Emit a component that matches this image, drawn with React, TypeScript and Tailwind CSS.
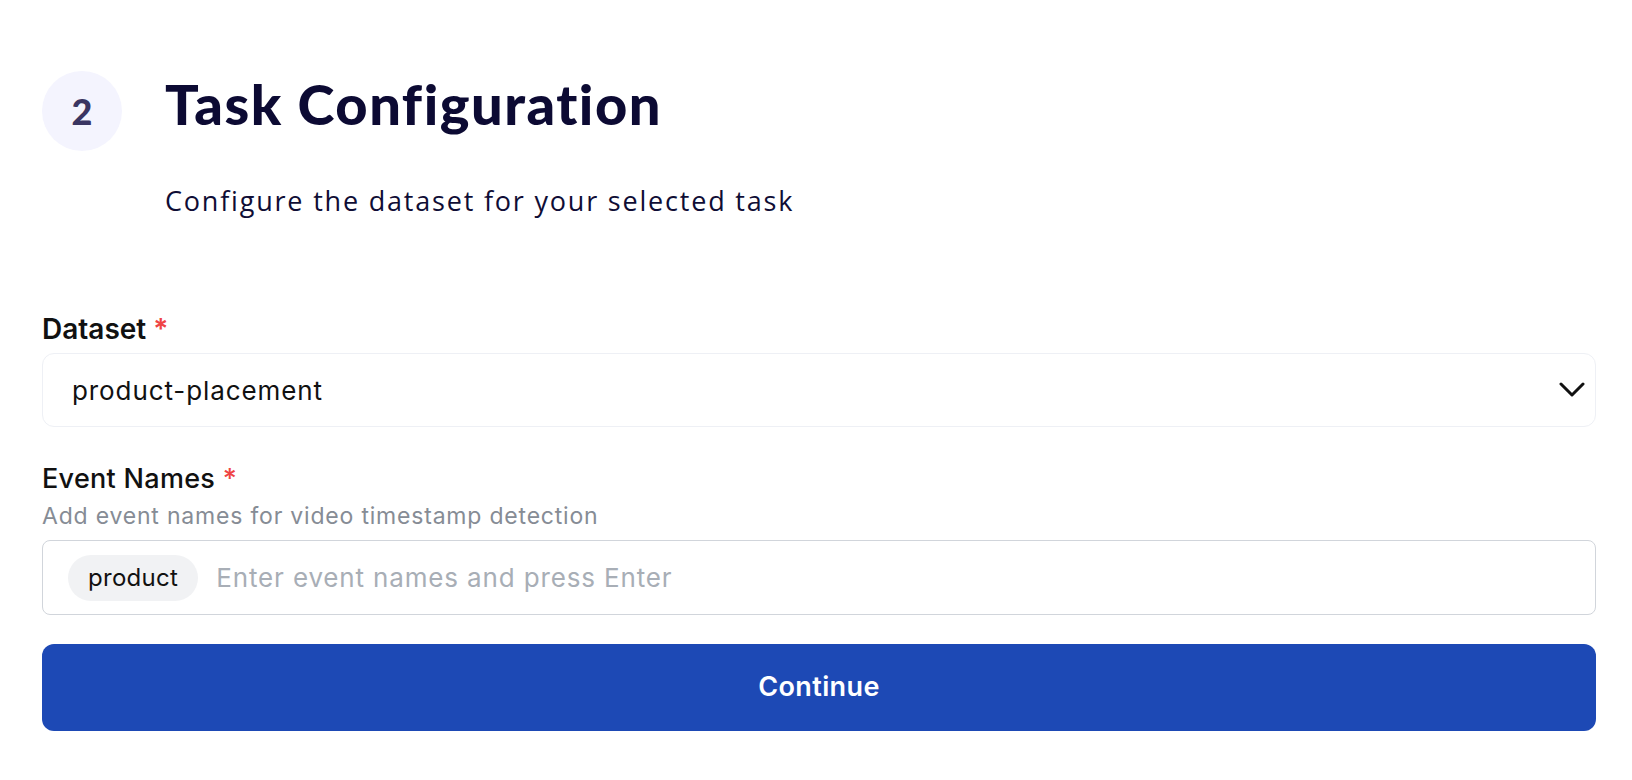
import React, { useState } from 'react';

const TaskConfiguration: React.FC = () => {
    const [dataset] = useState('product-placement');
    const [events] = useState<string[]>(['product']);
    const [draft, setDraft] = useState('');

    return (
        <div className="min-h-screen bg-white pl-[42px] pr-[36px] pt-[71px]">
            {/* header */}
            <div className="flex items-center gap-[43px]">
                <div className="w-[80px] h-[80px] rounded-full bg-[#f4f4fe] flex items-center justify-center shrink-0">
                    <span className="font-['Lato',sans-serif] font-black text-[36px] leading-none text-[#3a3562]">2</span>
                </div>
                <h1 className="font-['Lato',sans-serif] font-black text-[56px] leading-none text-[#0c0a33] -mt-[15px] tracking-[1.5px]">
                    Task Configuration
                </h1>
            </div>
            <p className="mt-[36px] pl-[123px] font-['Open_Sans',sans-serif] text-[27px] leading-none text-[#0f0d35] tracking-[1.8px]">
                Configure the dataset for your selected task
            </p>

            {/* form */}
            <div className="mt-[101px] font-['Inter',sans-serif]">
                <label className="block text-[28px] leading-none font-semibold text-[#111111]">
                    Dataset <span className="text-[#ef4444]">*</span>
                </label>
                <div className="mt-[10px] h-[74px] rounded-[12px] border border-[#eef0f5] flex items-center justify-between pl-[29px] pr-[10px]">
                    <span className="text-[26px] tracking-[0.9px] text-[#111111]">{dataset}</span>
                    <svg width="26" height="16" viewBox="0 0 26 16" fill="none">
                        <polyline points="2,2 13,13 24,2" stroke="#111111" strokeWidth="3" strokeLinecap="round" strokeLinejoin="round" />
                    </svg>
                </div>

                <label className="block mt-[38px] text-[27px] leading-none font-medium text-[#111111] tracking-[0.3px]">
                    Event Names <span className="text-[#ef4444]">*</span>
                </label>
                <p className="mt-[13px] text-[23px] leading-none text-[#868c95] tracking-[0.8px]">
                    Add event names for video timestamp detection
                </p>
                <div className="mt-[12px] h-[75px] rounded-[8px] border border-[#d1d5db] flex items-center pl-[25px] gap-[18px]">
                    {events.map((ev) => (
                        <span key={ev} className="h-[46px] px-[20px] rounded-full bg-[#f1f2f4] flex items-center text-[24px] tracking-[0.3px] text-[#111111]">
                            {ev}
                        </span>
                    ))}
                    <input
                        value={draft}
                        onChange={(e) => setDraft(e.target.value)}
                        placeholder="Enter event names and press Enter"
                        className="flex-1 outline-none text-[26px] tracking-[0.85px] text-[#111111] placeholder:text-[#a8aeb6] bg-transparent"
                    />
                </div>

                <button className="mt-[29px] w-full h-[87px] rounded-[12px] bg-[#1d49b5] text-white text-[27px] tracking-[0.4px] font-semibold">
                    Continue
                </button>
            </div>
        </div>
    );
};

export default function App() {
    return <TaskConfiguration />;
}
